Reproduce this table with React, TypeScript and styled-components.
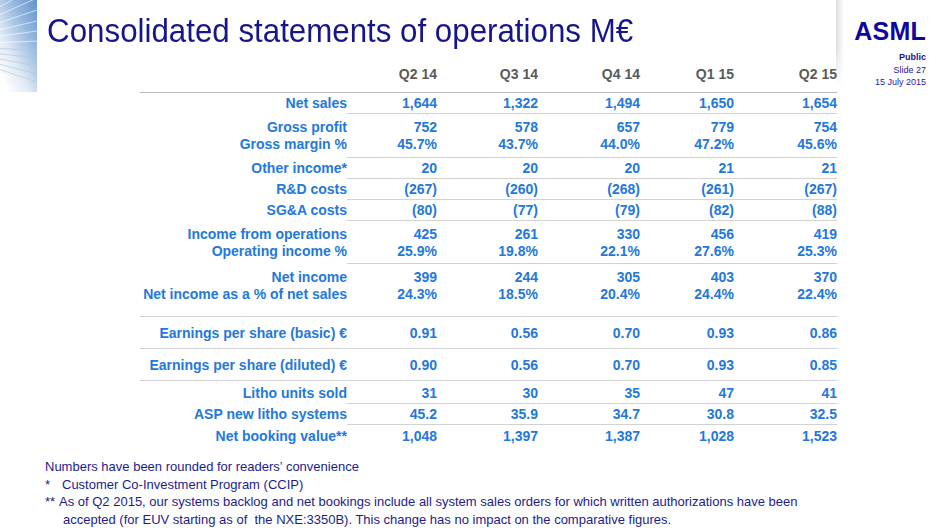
import React from 'react';
import styled, { createGlobalStyle } from 'styled-components';

type Rule = 'full' | 'part' | 'none';

interface StatementRow {
  labels: string[];
  values: string[][];
  rule: Rule;
  pt: number;
  pb: number;
}

const GlobalStyle = createGlobalStyle`
  html, body {
    margin: 0;
    padding: 0;
    background: #ffffff;
  }
  body {
    width: 940px;
    height: 528px;
    overflow: hidden;
    font-family: "Liberation Sans", Arial, sans-serif;
  }
`;

const Slide = styled.div`
  width: 940px;
  height: 528px;
  display: grid;
  grid-template-columns: 840px 100px;
  overflow: hidden;
`;

const Main = styled.main`
  position: relative;
  display: flex;
  align-items: flex-start;

  &::after {
    content: '';
    position: absolute;
    left: 836px;
    top: 0;
    width: 8px;
    height: 88px;
    background: linear-gradient(to right, rgba(0, 0, 0, 0.13), rgba(0, 0, 0, 0));
    -webkit-mask-image: linear-gradient(to bottom, #000 55%, transparent);
    mask-image: linear-gradient(to bottom, #000 55%, transparent);
  }
`;

const Decor = styled.svg`
  flex: 0 0 37px;
  display: block;
`;

const Content = styled.div`
  flex: 1;
  display: flex;
  flex-direction: column;
`;

const Title = styled.h1`
  margin: 0;
  padding: 10px 0 0 11px;
  height: 40px;
  font-size: 34px;
  line-height: 40px;
  font-weight: 400;
  color: #16168a;
  white-space: nowrap;
  transform: scaleX(0.92);
  transform-origin: left center;
`;

const Table = styled.div`
  margin: 10px 0 0 103px;
  width: 697px;
  display: flex;
  flex-direction: column;
`;

const Row = styled.div<{ $rule: Rule; $pt: number; $pb: number; $head?: boolean }>`
  display: grid;
  grid-template-columns: 207px 90px 101px 102px 94px 103px;

  & > * {
    padding-top: ${p => p.$pt}px;
    padding-bottom: ${p => p.$pb}px;
    border-bottom: 1px solid transparent;
  }
  ${p =>
    p.$rule === 'full' &&
    `& > * { border-bottom-color: ${p.$head ? '#b9b9b9' : '#d2d2d2'}; }`}
  ${p => p.$rule === 'part' && `& > :not(:first-child) { border-bottom-color: #d2d2d2; }`}
`;

const Cell = styled.div<{ $head?: boolean }>`
  text-align: right;
  font-size: 14px;
  line-height: 17px;
  font-weight: 700;
  white-space: nowrap;
  color: ${p => (p.$head ? '#5a5a5a' : '#2378dc')};
`;

const Line = styled.div``;

const Notes = styled.div`
  margin-top: 12px;
  padding-left: 8px;
  font-size: 13px;
  line-height: 17.5px;
  color: #1c1c8e;
  white-space: nowrap;
`;

const Note = styled.div<{ $indent?: number }>`
  display: flex;
  padding-left: ${p => p.$indent ?? 0}px;
`;

const Mark = styled.span<{ $w: number }>`
  flex: 0 0 ${p => p.$w}px;
`;

const Aside = styled.aside`
  display: flex;
  flex-direction: column;
  align-items: flex-end;
  padding: 19px 14px 0 0;
`;

const Logo = styled.div`
  font-size: 25px;
  line-height: 25px;
  font-weight: 900;
  color: #10069f;
  letter-spacing: 0.2px;
`;

const Meta = styled.div`
  margin-top: 7px;
  text-align: right;
  font-size: 9px;
  line-height: 12.5px;
  color: #2323a0;
`;

const MetaStrong = styled.div`
  font-weight: 700;
  color: #16168a;
`;

const quarters = ['Q2 14', 'Q3 14', 'Q4 14', 'Q1 15', 'Q2 15'];

const rows: StatementRow[] = [
  { labels: ['Net sales'], values: [['1,644'], ['1,322'], ['1,494'], ['1,650'], ['1,654']], rule: 'part', pt: 2, pb: 1 },
  {
    labels: ['Gross profit', 'Gross margin %'],
    values: [['752', '45.7%'], ['578', '43.7%'], ['657', '44.0%'], ['779', '47.2%'], ['754', '45.6%']],
    rule: 'part',
    pt: 5,
    pb: 4,
  },
  { labels: ['Other income*'], values: [['20'], ['20'], ['20'], ['21'], ['21']], rule: 'part', pt: 2, pb: 1 },
  { labels: ['R&D costs'], values: [['(267)'], ['(260)'], ['(268)'], ['(261)'], ['(267)']], rule: 'part', pt: 2, pb: 1 },
  { labels: ['SG&A costs'], values: [['(80)'], ['(77)'], ['(79)'], ['(82)'], ['(88)']], rule: 'part', pt: 2, pb: 1 },
  {
    labels: ['Income from operations', 'Operating income %'],
    values: [['425', '25.9%'], ['261', '19.8%'], ['330', '22.1%'], ['456', '27.6%'], ['419', '25.3%']],
    rule: 'part',
    pt: 5,
    pb: 3,
  },
  {
    labels: ['Net income', 'Net income as a % of net sales'],
    values: [['399', '24.3%'], ['244', '18.5%'], ['305', '20.4%'], ['403', '24.4%'], ['370', '22.4%']],
    rule: 'full',
    pt: 5,
    pb: 13,
  },
  { labels: ['Earnings per share (basic) €'], values: [['0.91'], ['0.56'], ['0.70'], ['0.93'], ['0.86']], rule: 'full', pt: 8, pb: 6 },
  { labels: ['Earnings per share (diluted) €'], values: [['0.90'], ['0.56'], ['0.70'], ['0.93'], ['0.85']], rule: 'full', pt: 8, pb: 6 },
  { labels: ['Litho units sold'], values: [['31'], ['30'], ['35'], ['47'], ['41']], rule: 'part', pt: 4, pb: 1 },
  { labels: ['ASP new litho systems'], values: [['45.2'], ['35.9'], ['34.7'], ['30.8'], ['32.5']], rule: 'part', pt: 2, pb: 1 },
  { labels: ['Net booking value**'], values: [['1,048'], ['1,397'], ['1,387'], ['1,028'], ['1,523']], rule: 'none', pt: 3, pb: 0 },
];

// radiating light lines of the corner artwork
const rays = [-14, -2, 10, 21, 31, 41, 50, 58, 66, 74, 82];

const CornerArt = () => (
  <Decor width="37" height="92" viewBox="0 0 37 92">
    <defs>
      <linearGradient id="cornerFill" x1="1" y1="0" x2="0.2" y2="1">
        <stop offset="0" stopColor="#6493cd" />
        <stop offset="0.35" stopColor="#98bae0" />
        <stop offset="0.7" stopColor="#dfe9f5" />
        <stop offset="1" stopColor="#ffffff" />
      </linearGradient>
    </defs>
    <rect width="37" height="92" fill="url(#cornerFill)" />
    {rays.map((y, i) => (
      <line
        key={y}
        x1="-70"
        y1="46"
        x2="37"
        y2={y}
        stroke={i < 6 ? '#ffffff' : '#b7c6d8'}
        strokeOpacity={i < 6 ? 0.75 : 0.8}
        strokeWidth="0.8"
      />
    ))}
  </Decor>
);

export default function App() {
  return (
    <>
      <GlobalStyle />
      <Slide>
        <Main>
          <CornerArt />
          <Content>
            <Title>Consolidated statements of operations M€</Title>
            <Table>
              <Row $rule="full" $pt={6} $pb={9} $head>
                <Cell $head />
                {quarters.map(q => (
                  <Cell key={q} $head>
                    {q}
                  </Cell>
                ))}
              </Row>
              {rows.map(row => (
                <Row key={row.labels[0]} $rule={row.rule} $pt={row.pt} $pb={row.pb}>
                  <Cell>
                    {row.labels.map(l => (
                      <Line key={l}>{l}</Line>
                    ))}
                  </Cell>
                  {row.values.map((v, i) => (
                    <Cell key={i}>
                      {v.map((s, j) => (
                        <Line key={j}>{s}</Line>
                      ))}
                    </Cell>
                  ))}
                </Row>
              ))}
            </Table>
            <Notes>
              <Note>Numbers have been rounded for readers’ convenience</Note>
              <Note>
                <Mark $w={17}>*</Mark>
                <span>Customer Co-Investment Program (CCIP)</span>
              </Note>
              <Note>
                <Mark $w={14}>**</Mark>
                <span>
                  As of Q2 2015, our systems backlog and net bookings include all system sales orders for which
                  written authorizations have been
                </span>
              </Note>
              <Note $indent={18}>
                accepted (for EUV starting as of&nbsp; the NXE:3350B). This change has no impact on the comparative
                figures.
              </Note>
            </Notes>
          </Content>
        </Main>
        <Aside>
          <Logo>ASML</Logo>
          <Meta>
            <MetaStrong>Public</MetaStrong>
            <div>Slide 27</div>
            <div>15 July 2015</div>
          </Meta>
        </Aside>
      </Slide>
    </>
  );
}
